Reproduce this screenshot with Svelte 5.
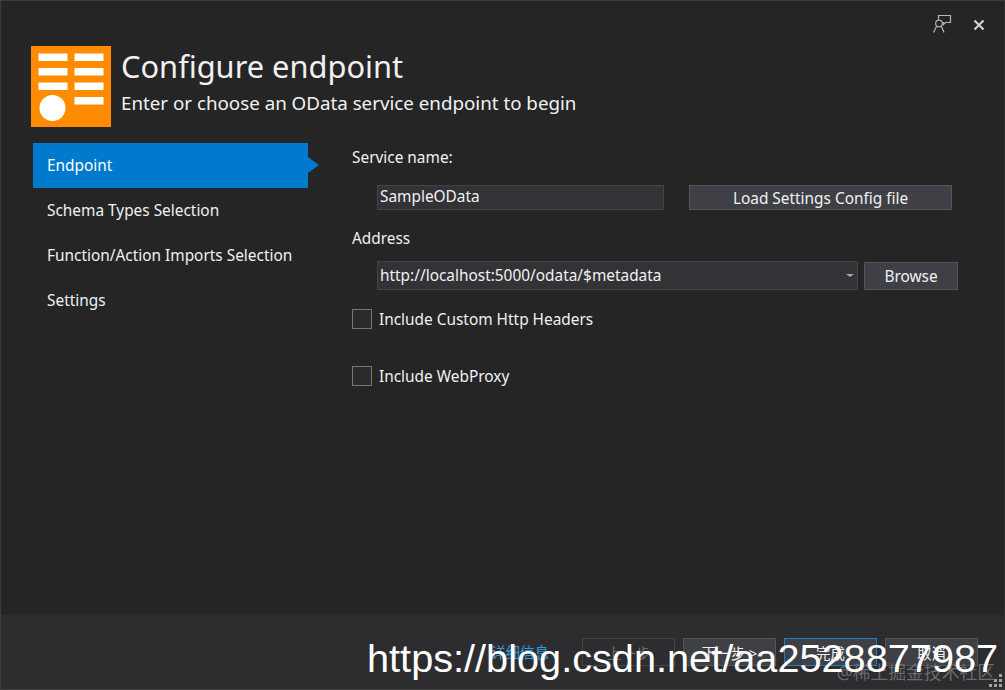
<script>
  const steps = ['Endpoint', 'Schema Types Selection', 'Function/Action Imports Selection', 'Settings'];
  const grip = [[2,0],[1,1],[2,1],[0,2],[1,2],[2,2]];
</script>

<div class="window">
  <div class="titlebar">
    <svg class="feedback" width="20" height="20" viewBox="0 0 20 20" fill="none" stroke="#b4b4b4" stroke-width="1.2">
      <path d="M6.5 5.5V1.5H18.5V8.5H13.5L11.5 10.5V8"/>
      <circle cx="7" cy="9.5" r="3.3"/>
      <path d="M1.5 18.5L4.5 12.5M12 18.5L9.5 12.5"/>
    </svg>
    <svg class="close" width="12" height="12" viewBox="0 0 12 12" stroke="#d0d0d0" stroke-width="2.2">
      <path d="M1.5 1.5L10.5 10.5M10.5 1.5L1.5 10.5"/>
    </svg>
  </div>

  <header class="header">
    <svg class="logo" width="80" height="81" viewBox="0 0 80 81">
      <rect width="80" height="81" fill="#ff8c00"/>
      <g fill="#fff">
        <rect x="7.500" y="7.500" width="29" height="7.500"/>
        <rect x="43.500" y="7.500" width="29" height="7.500"/>
        <rect x="7.500" y="22" width="29" height="7.500"/>
        <rect x="43.500" y="22" width="29" height="7.500"/>
        <rect x="7.500" y="36.500" width="29" height="7.500"/>
        <rect x="43.500" y="36.500" width="29" height="7.500"/>
        <rect x="43.500" y="51" width="29" height="7.500"/>
        <circle cx="21.500" cy="62" r="13"/>
      </g>
    </svg>
    <div class="titles">
      <h1>Configure endpoint</h1>
      <p>Enter or choose an OData service endpoint to begin</p>
    </div>
  </header>

  <main class="body">
    <nav class="nav">
      {#each steps as step, i}
        <div class="step" class:active={i === 0}>{step}</div>
      {/each}
    </nav>

    <section class="form">
      <div class="label first">Service name:</div>
      <div class="row name-row">
        <div class="input name-input">SampleOData</div>
        <button class="btn load">Load Settings Config file</button>
      </div>
      <div class="label address">Address</div>
      <div class="row addr-row">
        <div class="input combo">
          <span>http://localhost:5000/odata/$metadata</span>
          <i class="caret"></i>
        </div>
        <button class="btn browse">Browse</button>
      </div>
      <label class="check custom"><span class="box"></span>Include Custom Http Headers</label>
      <label class="check proxy"><span class="box"></span>Include WebProxy</label>
    </section>
  </main>

  <footer class="footer">
    <span class="details">详细信息</span>
    <button class="fbtn disabled">上一步</button>
    <button class="fbtn">下一步 &gt;</button>
    <button class="fbtn primary">完成</button>
    <button class="fbtn">取消</button>
    <div class="grip">
      {#each grip as g}
        <i style="grid-column:{g[0] + 1};grid-row:{g[1] + 1}"></i>
      {/each}
    </div>
  </footer>

  <div class="mark-juejin">@稀土掘金技术社区</div>
  <div class="mark-url">https://blog.csdn.net/aa2528877987</div>
</div>

<style>
  :global(body) {
    margin: 0;
    background: #252526;
  }
  .window {
    position: relative;
    box-sizing: border-box;
    width: 1005px;
    height: 690px;
    display: flex;
    flex-direction: column;
    background: #252526;
    border: 1px solid #3c3c3e;
    border-right-color: #2f2f31;
    color: #f1f1f1;
    font-family: "Noto Sans", "Noto Sans CJK SC", sans-serif;
    font-size: 15.4px;
    overflow: hidden;
  }
  .titlebar {
    height: 45px;
    flex: none;
    display: flex;
    align-items: flex-start;
    justify-content: flex-end;
    gap: 21px;
    padding: 13px 19px 0 0;
    box-sizing: border-box;
  }
  .close { margin-top: 5px; }
  .header {
    display: flex;
    gap: 10px;
    padding-left: 30px;
    height: 81px;
    flex: none;
  }
  .logo { flex: none; }
  h1 {
    margin: 0;
    font-size: 30.800px;
    font-weight: 400;
    line-height: 40px;
  }
  .titles p {
    margin: 5px 0 0;
    font-size: 18.750px;
    line-height: 24px;
  }
  .body {
    flex: 1;
    display: flex;
    padding: 16px 0 0 32px;
    min-height: 0;
  }
  .nav {
    width: 275px;
    flex: none;
  }
  .step {
    height: 45px;
    line-height: 45px;
    padding-left: 14px;
    position: relative;
    color: #f1f1f1;
    white-space: nowrap;
  }
  .step.active {
    background: #007acc;
    color: #fff;
  }
  .step.active::after {
    content: "";
    position: absolute;
    left: 100%;
    top: 14px;
    border-left: 11px solid #007acc;
    border-top: 8px solid transparent;
    border-bottom: 8px solid transparent;
  }
  .form {
    padding-left: 44px;
    flex: 1;
  }
  .label { line-height: 20px; }
  .first { margin-top: 5px; }
  .row { display: flex; align-items: center; }
  .name-row {
    margin: 16px 0 0 25px;
    gap: 25px;
  }
  .input {
    box-sizing: border-box;
    background: #333337;
    border: 1px solid #434346;
    padding-left: 2px;
    color: #f1f1f1;
    white-space: nowrap;
  }
  .name-input {
    width: 287px;
    height: 25px;
    line-height: 21px;
  }
  .btn, .fbtn {
    box-sizing: border-box;
    background: #3f3f46;
    border: 1px solid #555558;
    color: #f1f1f1;
    font: inherit;
    padding: 1px 0 0;
  }
  .load {
    width: 263px;
    height: 25px;
    margin-top: 1px;
  }
  .address { margin-top: 19px; }
  .addr-row {
    margin: 12px 0 0 25px;
    gap: 6px;
  }
  .combo {
    width: 481px;
    height: 29px;
    line-height: 27px;
    display: flex;
    justify-content: space-between;
    align-items: center;
  }
  .caret {
    width: 0;
    height: 0;
    margin-right: 3px;
    border-left: 4px solid transparent;
    border-right: 4px solid transparent;
    border-top: 3px solid #a8a8a8;
  }
  .browse {
    width: 94px;
    height: 28px;
  }
  .check {
    display: flex;
    align-items: center;
    gap: 7px;
    height: 20px;
  }
  .custom { margin-top: 19px; }
  .proxy { margin-top: 37px; }
  .box {
    box-sizing: border-box;
    width: 20px;
    height: 20px;
    border: 1px solid #77777a;
    background: #2a2a2c;
  }
  .footer {
    flex: none;
    height: 74px;
    box-sizing: border-box;
    background: #2d2d30;
    display: flex;
    align-items: flex-start;
    justify-content: flex-end;
    gap: 8px;
    padding: 23px 26px 0 0;
    position: relative;
    font-size: 14.500px;
  }
  .details {
    color: #3399e0;
    margin: 4px 25px 0 0;
    line-height: 20px;
  }
  .fbtn {
    width: 93px;
    height: 28px;
    font-size: 14.500px;
  }
  .fbtn.disabled {
    background: transparent;
    border-color: #464649;
    color: #6d6d70;
  }
  .fbtn.primary {
    border-color: #1f7fc4;
  }
  .grip {
    position: absolute;
    right: 2px;
    bottom: 2px;
    display: grid;
    grid-template-columns: repeat(3, 3px);
    grid-template-rows: repeat(3, 3px);
    gap: 2px;
  }
  .grip i { background: #a0a0a0; }
  .mark-url {
    position: absolute;
    left: 366px;
    top: 630px;
    font-family: "Liberation Sans", Arial, sans-serif;
    font-size: 39.700px;
    line-height: 54px;
    color: #fff;
    white-space: nowrap;
  }
  .mark-juejin {
    position: absolute;
    right: 9px;
    top: 660px;
    font-size: 17.800px;
    line-height: 22px;
    color: #6a6a6d;
    white-space: nowrap;
  }
</style>
